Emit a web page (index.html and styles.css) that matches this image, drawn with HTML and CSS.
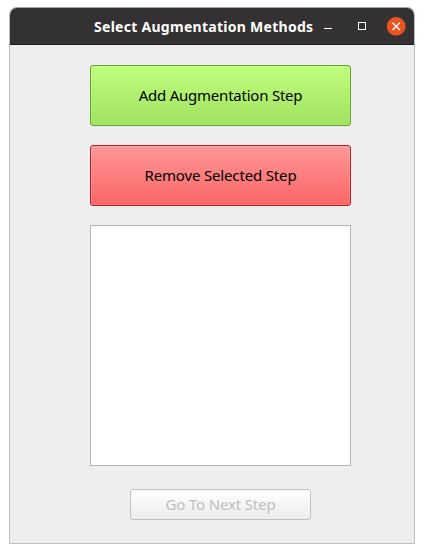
FILE: index.html
```html
<!DOCTYPE html>
<html lang="en">
<head>
<meta charset="utf-8">
<title>Select Augmentation Methods</title>
<link rel="stylesheet" href="styles.css">
</head>
<body>
<main class="window">
  <header class="titlebar">
    <h1 class="title">Select Augmentation Methods</h1>
    <div class="controls">
      <svg class="control minimize" width="8" height="8" viewBox="0 0 8 8"><path d="M0 6.5h8" stroke="#fff"/></svg>
      <svg class="control maximize" width="8" height="8" viewBox="0 0 8 8"><rect x=".5" y=".5" width="7" height="7" fill="none" stroke="#fff"/></svg>
      <svg class="control close" width="19" height="19" viewBox="0 0 19 19"><circle cx="9.2" cy="9.4" r="9.4" fill="#e95420"/><path d="M5.5 5.7l7.4 7.4M12.9 5.7l-7.4 7.4" stroke="#fff" stroke-width="1.4"/></svg>
    </div>
  </header>
  <section class="content">
    <button class="button add"><span>Add Augmentation Step</span></button>
    <button class="button remove"><span>Remove Selected Step</span></button>
    <div class="list"></div>
    <button class="button next" disabled><span>Go To Next Step</span></button>
  </section>
</main>
</body>
</html>
```
FILE: styles.css
```css
* { box-sizing: border-box; }
body {
  margin: 0;
  padding: 7px 9px 9px;
  background: #fff;
  font-family: "Noto Sans", sans-serif;
}
.window {
  width: 406px;
  height: 537px;
  border: 1px solid #c0c0c0;
  border-top-color: #a5a5a5;
  border-radius: 8px 8px 0 0;
  background: #eee;
  overflow: hidden;
}
.titlebar {
  display: flex;
  height: 37px;
  padding-left: 84px;
  background: #333132;
  border-bottom: 1px solid #1f1e1f;
}
.title {
  width: 230px;
  margin: 0;
  color: #fff;
  font-size: 14px;
  font-weight: 700;
  line-height: 37px;
  letter-spacing: 0.28px;
  white-space: nowrap;
}
.controls {
  display: flex;
  align-items: center;
}
.control { overflow: visible; }
.minimize { margin-right: 26px; }
.maximize { margin-right: 21px; }
.content {
  display: flex;
  flex-direction: column;
  align-items: center;
  padding: 20px 0 0 17px;
}
.button {
  width: 261px;
  height: 61px;
  margin: 0 0 19px;
  padding: 0 0 2px;
  border: 1px solid;
  border-radius: 3px;
  color: #000;
  font: 15px "Noto Sans", sans-serif;
  letter-spacing: -0.23px;
  white-space: nowrap;
}
.add {
  border-color: #62a32a;
  background: linear-gradient(#c0ff7d, #a1e160);
  box-shadow: inset 0 0 0 1px rgba(255, 255, 255, 0.12);
}
.remove {
  border-color: #b02026;
  background: linear-gradient(#ff9797, #fb6666);
  box-shadow: inset 0 0 0 1px rgba(255, 255, 255, 0.12);
  letter-spacing: -0.16px;
}
.list {
  width: 261px;
  height: 241px;
  margin-bottom: 23px;
  border: 1px solid #b4b4b4;
  background: #fff;
}
.next {
  width: 181px;
  height: 31px;
  margin: 0;
  border-color: #c0c0c0;
  background: linear-gradient(#fff, #ececec);
  color: #bebebe;
  letter-spacing: -0.15px;
}
```
